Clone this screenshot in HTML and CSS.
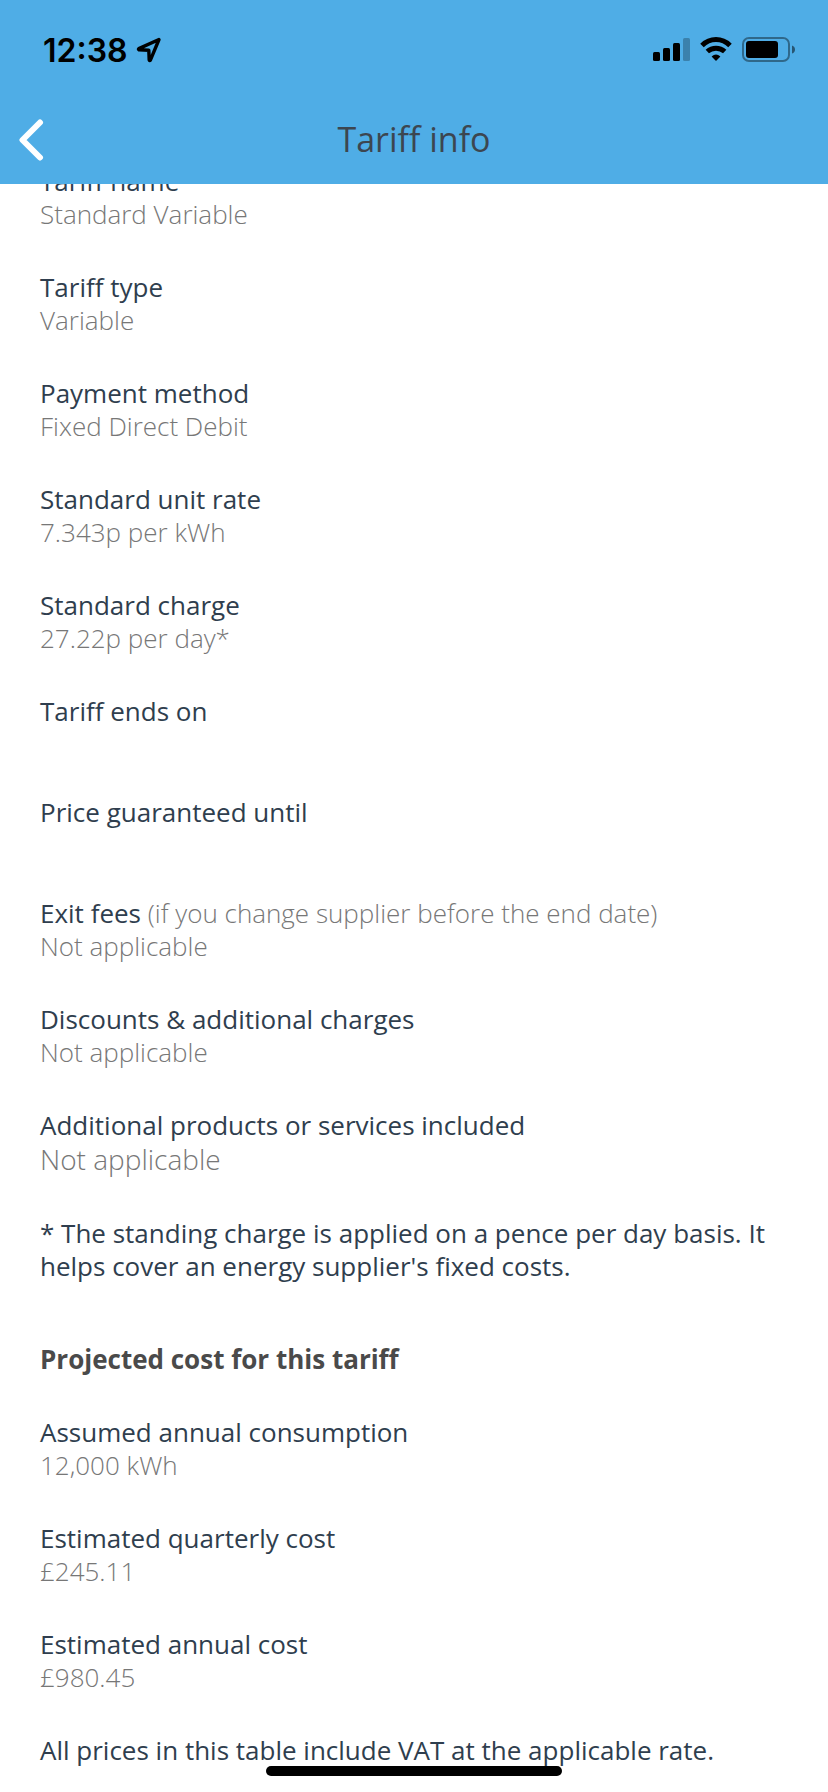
FILE: index.html
```
<!DOCTYPE html>
<html lang="en">
<head>
  <meta charset="UTF-8">
  <meta name="viewport" content="width=device-width,initial-scale=1">
  <title>Tariff info</title>
  <link rel="stylesheet" href="styles.css">
</head>
<body>

  <header class="top">
    <div class="status-bar">
      <span class="time">12:38</span>
      <svg class="location" width="26" height="26" viewBox="0 0 26 26"><path d="M23 2.5 L2.8 11.6 Q2 12.4 3 12.8 L12.8 13.2 L13.2 23 Q13.6 24.2 14.4 23.2 Z" fill="none" stroke="#000" stroke-width="3.4" stroke-linejoin="round"/></svg>
      <div class="status-icons">
        <svg width="37" height="26" viewBox="0 0 37 26">
          <rect x="0" y="15" width="7" height="9" rx="1.5"/>
          <rect x="10" y="11" width="7" height="13" rx="1.5"/>
          <rect x="20" y="6" width="7" height="18" rx="1.5"/>
          <rect x="30" y="1" width="7" height="23" rx="1.5" opacity=".25"/>
        </svg>
        <svg width="32" height="26" viewBox="0 0 32 26">
          <path d="M2 8.5 Q8 2.6 16 2.6 Q24 2.6 30 8.5" fill="none" stroke="#000" stroke-width="5"/>
          <path d="M7.3 14.5 Q11 11.2 16 11.2 Q21 11.2 24.7 14.5" fill="none" stroke="#000" stroke-width="5"/>
          <path d="M11.6 19.4 Q16 15.6 20.4 19.4 L16.5 23.5 Q16 24 15.5 23.5 Z"/>
        </svg>
        <svg width="54" height="26" viewBox="0 0 54 26">
          <rect x="1" y="1" width="46" height="23" rx="6" fill="none" stroke="#000" stroke-width="2" opacity=".4"/>
          <rect x="4" y="4" width="32" height="17" rx="3"/>
          <path d="M50 8.5 Q53 9.5 53 12.5 Q53 15.5 50 16.5 Z" opacity=".5"/>
        </svg>
      </div>
    </div>
    <nav class="nav-bar">
      <a href="#" class="back" aria-label="Back">
        <svg width="26" height="44" viewBox="0 0 26 44"><path d="M22 4.5 L4.5 22 L22 39.5" fill="none" stroke="#fff" stroke-width="6" stroke-linecap="round" stroke-linejoin="round"/></svg>
      </a>
      <h1>Tariff info</h1>
    </nav>
  </header>

  <main>
    <dl class="info">
      <div class="item"><dt>Tariff name</dt><dd>Standard Variable</dd></div>
      <div class="item"><dt>Tariff type</dt><dd>Variable</dd></div>
      <div class="item"><dt>Payment method</dt><dd>Fixed Direct Debit</dd></div>
      <div class="item"><dt>Standard unit rate</dt><dd>7.343p per kWh</dd></div>
      <div class="item"><dt>Standard charge</dt><dd>27.22p per day*</dd></div>
      <div class="item"><dt>Tariff ends on</dt><dd class="empty"></dd></div>
      <div class="item"><dt>Price guaranteed until</dt><dd class="empty"></dd></div>
      <div class="item"><dt>Exit fees <span class="hint">(if you change supplier before the end date)</span></dt><dd>Not applicable</dd></div>
      <div class="item"><dt>Discounts &amp; additional charges</dt><dd>Not applicable</dd></div>
      <div class="item"><dt>Additional products or services included</dt><dd class="large">Not applicable</dd></div>
    </dl>

    <p class="note">* The standing charge is applied on a pence per day basis. It helps cover an energy supplier's fixed costs.</p>

    <h2>Projected cost for this tariff</h2>

    <dl class="info">
      <div class="item"><dt>Assumed annual consumption</dt><dd>12,000 kWh</dd></div>
      <div class="item"><dt>Estimated quarterly cost</dt><dd>£245.11</dd></div>
      <div class="item"><dt>Estimated annual cost</dt><dd>£980.45</dd></div>
    </dl>

    <p>All prices in this table include VAT at the applicable rate.</p>
  </main>

  <div class="home-indicator"></div>

</body>
</html>
```
FILE: styles.css
```
body { margin:0; background:#fff; color:#2f3e4e; font-family:"Open Sans", "Noto Sans", sans-serif; font-size:26px; line-height:33px; }
h1, h2, p, dl, dd { margin:0; }
svg { display:block; }

/* header stays above the scrolled list */
.top { position:fixed; top:0; left:0; right:0; z-index:1; background:#4fade6; }
.status-bar { display:flex; align-items:center; height:100px; padding:0 32px 0 43px; }
.time { font-family:Inter, sans-serif; font-size:32px; font-weight:600; color:#000; }
.location { margin-left:8px; }
.status-icons { display:flex; gap:10px; margin-left:auto; }
.nav-bar { display:grid; grid-template-columns:60px 1fr 60px; align-items:center; height:84px; }
.back { padding:0 0 4px 18px; }
h1 { text-align:center; font-size:34px; font-weight:400; line-height:44px; padding-bottom:6px; color:#3c4650; }

main { padding:165px 40px 25px; }
.item { margin-bottom:40px; }
dd, .hint { font-weight:300; color:#777; }
.empty { height:28px; }
.large { font-size:28px; line-height:35px; }
.note { margin-bottom:60px; }
h2 { margin-bottom:40px; font-size:26px; font-weight:700; color:#4a4a4a; }

.home-indicator { position:fixed; bottom:16px; left:50%; width:296px; height:10px; margin-left:-148px; border-radius:5px; background:#000; }
```
